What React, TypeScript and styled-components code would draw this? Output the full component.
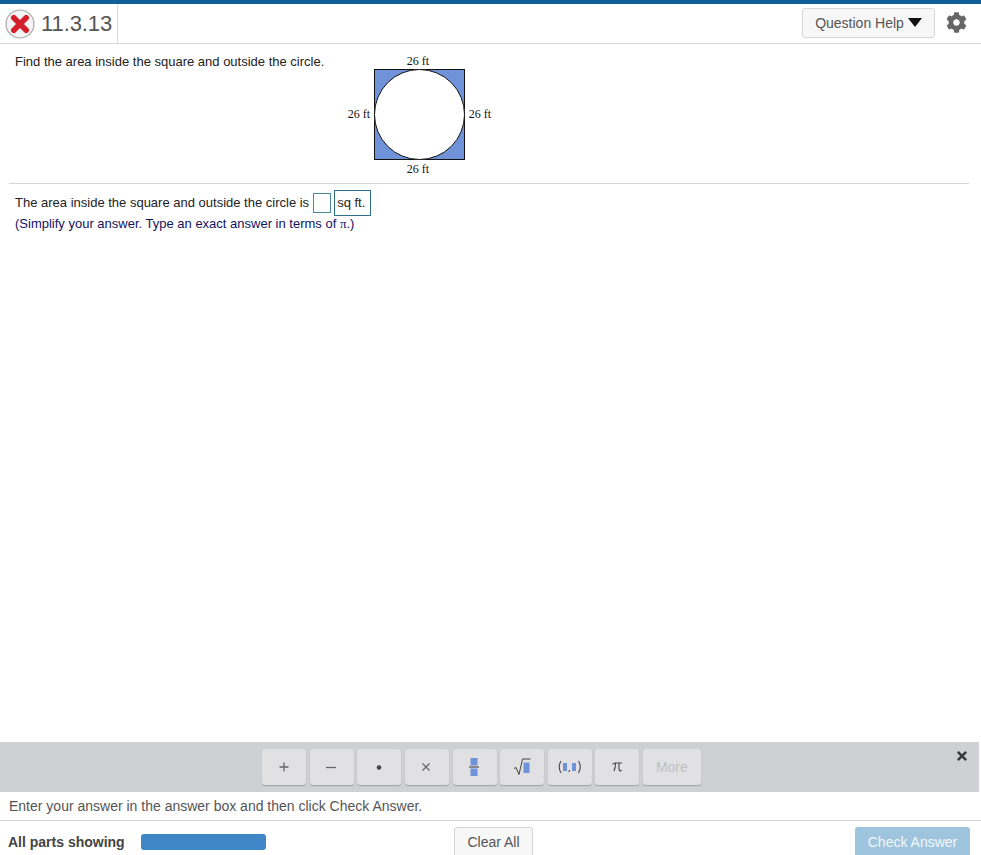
import React from "react";
import styled, { createGlobalStyle } from "styled-components";
import { FaCog, FaTimes } from "react-icons/fa";

const Global = createGlobalStyle`
  html, body { margin: 0; padding: 0; background: #fff; }
  body { font-family: "Liberation Sans", Arial, sans-serif; }
`;

const Page = styled.div`
  height: 855px;
  width: 981px;
  display: flex;
  flex-direction: column;
  overflow: hidden;
  background: #fff;
`;
const TopStripe = styled.div`
  height: 4px;
  flex: none;
  background: #0f5f98;
`;
const Header = styled.header`
  height: 39px;
  flex: none;
  display: flex;
  align-items: stretch;
  border-bottom: 1px solid #d6d6d6;
`;
const Status = styled.div`
  width: 118px;
  display: flex;
  align-items: center;
  gap: 6px;
  padding: 0 0 0 5px;
  box-sizing: border-box;
  border-right: 1px solid #d9d9d9;
`;
const QNumber = styled.span`
  font-size: 22px;
  color: #555;
  letter-spacing: -0.1px;
`;
const HeaderRight = styled.div`
  margin-left: auto;
  display: flex;
  align-items: center;
  padding: 0 14px 2px 0;
  gap: 11px;
`;
const HelpButton = styled.button`
  width: 133px;
  height: 30px;
  display: flex;
  align-items: center;
  justify-content: center;
  gap: 4px;
  padding: 0;
  font: 14px "Liberation Sans", Arial, sans-serif;
  color: #555;
  background: #f7f7f7;
  border: 1px solid #d8d8d8;
  border-radius: 3px;
`;
const Gear = styled(FaCog)`
  width: 21px;
  height: 21px;
  color: #666;
`;
const Main = styled.main`
  flex: 1;
  min-height: 0;
  padding: 0 12px 0 9px;
`;
const QuestionRow = styled.section`
  display: flex;
  align-items: flex-start;
  height: 139px;
  border-bottom: 1px solid #d4d4d4;
`;
const Prompt = styled.p`
  width: 325px;
  margin: 10px 0 0;
  padding-left: 6px;
  box-sizing: border-box;
  font-size: 13px;
  line-height: 16px;
  color: #222;
  white-space: nowrap;
`;
const Figure = styled.svg`
  display: block;
  width: 160px;
  height: 135px;
  margin: 6px 0 0 6px;
  flex: none;
`;
const Label = styled.text`
  font-family: "Liberation Serif", "Times New Roman", serif;
  font-size: 12px;
  fill: #111;
  text-anchor: middle;
`;
const AnswerBlock = styled.section`
  padding: 6px 0 0 6px;
`;
const AnswerLine = styled.div`
  display: flex;
  align-items: center;
  height: 25px;
  font-size: 13px;
  color: #222;
`;
const Blank = styled.span`
  display: block;
  box-sizing: border-box;
  width: 18px;
  height: 20px;
  margin: 0 3px 0 4px;
  border: 1px solid #4d8a99;
  background: #fff;
`;
const Unit = styled.span`
  display: block;
  box-sizing: border-box;
  width: 37px;
  height: 26px;
  padding: 0 0 0 2px;
  line-height: 24px;
  border: 1px solid #2c7187;
`;
const Hint = styled.div`
  font-size: 13px;
  line-height: 17px;
  color: #12125f;
  margin-top: 0;
`;
const PiMark = styled.span`
  font-family: "Liberation Serif", serif;
`;
const Palette = styled.div`
  position: relative;
  flex: none;
  width: 979px;
  height: 50px;
  box-sizing: border-box;
  padding: 7px 16px 0 0;
  background: #ced0d4;
  display: flex;
  justify-content: center;
  gap: 3.6px;
  align-items: flex-start;
`;
const PadButton = styled.button<{ $wide?: boolean }>`
  width: ${(p) => (p.$wide ? 58 : 44)}px;
  height: 36px;
  padding: 0;
  display: flex;
  align-items: center;
  justify-content: center;
  background: #e1e1e3;
  border: 0;
  border-radius: 3px;
  box-shadow: 0 1px 1px #9fa1a5;
  font: 14px "Liberation Sans", Arial, sans-serif;
  color: ${(p) => (p.$wide ? "#c0c0c2" : "#555")};
`;
const PadIcon = styled.svg`
  display: block;
  width: 30px;
  height: 24px;
`;
const CloseButton = styled(FaTimes)`
  position: absolute;
  right: 10px;
  top: 7px;
  width: 14px;
  height: 14px;
  color: #3a3a3c;
`;
const Message = styled.div`
  flex: none;
  height: 29px;
  box-sizing: border-box;
  padding: 5px 0 0 9px;
  font-size: 14px;
  line-height: 18px;
  color: #555;
  border-bottom: 1px solid #d4d4d4;
`;
const Footer = styled.footer`
  flex: none;
  height: 34px;
  display: flex;
  align-items: flex-start;
  padding: 0 11px 0 8px;
`;
const PartsLabel = styled.strong`
  width: 133px;
  margin-top: 12px;
  font-size: 14px;
  line-height: 18px;
  color: #444;
`;
const Progress = styled.div`
  width: 125px;
  height: 16px;
  margin-top: 13px;
  border-radius: 3px;
  background: #3f87c6;
`;
const ClearAll = styled.button`
  width: 79px;
  height: 36px;
  margin: 6px 0 0 188px;
  padding: 0 0 7px;
  background: #f7f7f7;
  border: 1px solid #d4d4d4;
  border-radius: 3px;
  font: 14px "Liberation Sans", Arial, sans-serif;
  color: #555;
`;
const CheckAnswer = styled.button`
  width: 115px;
  height: 36px;
  margin: 6px 0 0 auto;
  padding: 0 0 7px;
  background: #9fc5de;
  border: 0;
  border-radius: 3px;
  font: 14px "Liberation Sans", Arial, sans-serif;
  color: #f2f7fb;
`;

const fill = "#6f92d8";

export default function App() {
  return (
    <Page>
      <Global />
      <TopStripe />
      <Header>
        <Status>
          <svg width="30" height="30" viewBox="0 0 30 30" aria-hidden="true">
            <circle cx="15" cy="15" r="14" fill="#f4f4f4" stroke="#a8a8a8" strokeWidth="1.2" />
            <path d="M8.8 8.8 L21.2 21.2 M21.2 8.8 L8.8 21.2" stroke="#d3202a" strokeWidth="5.6" strokeLinecap="round" />
          </svg>
          <QNumber>11.3.13</QNumber>
        </Status>
        <HeaderRight>
          <HelpButton>
            Question Help
            <svg width="14" height="9" viewBox="0 0 14 9" aria-hidden="true">
              <path d="M0 0 H14 L7 9 Z" fill="#111" />
            </svg>
          </HelpButton>
          <Gear />
        </HeaderRight>
      </Header>
      <Main>
        <QuestionRow>
          <Prompt>Find the area inside the square and outside the circle.</Prompt>
          <Figure viewBox="0 0 160 135">
            <rect x="34.5" y="19.5" width="90" height="90" fill={fill} stroke="#111" />
            <circle cx="79.5" cy="64.5" r="45" fill="#fff" stroke="#111" />
            <Label x="78" y="15">26 ft</Label>
            <Label x="19" y="68">26 ft</Label>
            <Label x="140" y="68">26 ft</Label>
            <Label x="78" y="123">26 ft</Label>
          </Figure>
        </QuestionRow>
        <AnswerBlock>
          <AnswerLine>
            The area inside the square and outside the circle is
            <Blank />
            <Unit>sq ft.</Unit>
          </AnswerLine>
          <Hint>
            (Simplify your answer. Type an exact answer in terms of <PiMark>π</PiMark>.)
          </Hint>
        </AnswerBlock>
      </Main>
      <Palette>
        <PadButton aria-label="plus">
          <PadIcon viewBox="0 0 30 24"><path d="M15 7.5v9M10.5 12h9" stroke="#666" strokeWidth="1.3" fill="none" /></PadIcon>
        </PadButton>
        <PadButton aria-label="minus">
          <PadIcon viewBox="0 0 30 24"><path d="M9 12.5h10" stroke="#666" strokeWidth="1.3" fill="none" /></PadIcon>
        </PadButton>
        <PadButton aria-label="dot">
          <PadIcon viewBox="0 0 30 24"><circle cx="15" cy="12.5" r="2.3" fill="#444" /></PadIcon>
        </PadButton>
        <PadButton aria-label="times">
          <PadIcon viewBox="0 0 30 24"><path d="M10.5 8.5l7 7M17.5 8.5l-7 7" stroke="#666" strokeWidth="1.2" fill="none" /></PadIcon>
        </PadButton>
        <PadButton aria-label="fraction">
          <PadIcon viewBox="0 0 30 24">
            <rect x="10.5" y="3" width="7" height="7.5" fill={fill} />
            <path d="M9 12h10" stroke="#333" strokeWidth="1" />
            <rect x="10.5" y="13.5" width="7" height="7.5" fill={fill} />
          </PadIcon>
        </PadButton>
        <PadButton aria-label="square root">
          <PadIcon viewBox="0 0 30 24">
            <path d="M7 13.5l2-1 3 7 3.5-15.5h8" stroke="#444" strokeWidth="1" fill="none" />
            <rect x="16.5" y="7.5" width="6" height="10.5" fill={fill} />
          </PadIcon>
        </PadButton>
        <PadButton aria-label="ordered pair">
          <PadIcon viewBox="0 0 30 24">
            <path d="M6 6q-3.5 6 0 12M23.5 6q3.5 6 0 12" stroke="#445" strokeWidth="1.1" fill="none" />
            <rect x="8" y="8" width="4" height="8" fill={fill} />
            <rect x="17" y="8" width="4" height="8" fill={fill} />
            <path d="M14.5 15l-.5 2" stroke="#333" strokeWidth="1" />
          </PadIcon>
        </PadButton>
        <PadButton aria-label="pi">
          <PadIcon viewBox="0 0 30 24">
            <path d="M10.5 9.5q1-1.5 2.5-1.5h7M13.5 8q0 5-1.5 8M17 8q-.3 6 .5 7.5q1 1 2-.5" stroke="#444" strokeWidth="1.1" fill="none" />
          </PadIcon>
        </PadButton>
        <PadButton $wide>More</PadButton>
        <CloseButton />
      </Palette>
      <Message>Enter your answer in the answer box and then click Check Answer.</Message>
      <Footer>
        <PartsLabel>All parts showing</PartsLabel>
        <Progress />
        <ClearAll>Clear All</ClearAll>
        <CheckAnswer>Check Answer</CheckAnswer>
      </Footer>
    </Page>
  );
}
